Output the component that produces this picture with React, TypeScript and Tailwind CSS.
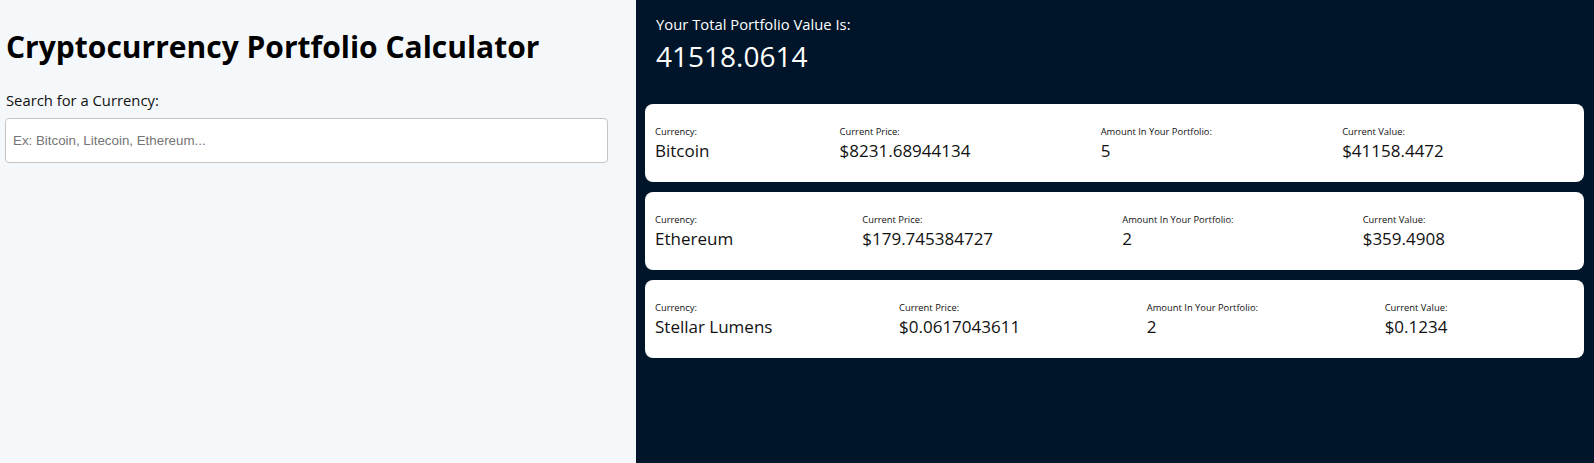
import React from "react";

type Row = { name: string; price: string; amount: string; value: string };

const rows: Row[] = [
  { name: "Bitcoin", price: "$8231.68944134", amount: "5", value: "$41158.4472" },
  { name: "Ethereum", price: "$179.745384727", amount: "2", value: "$359.4908" },
  { name: "Stellar Lumens", price: "$0.0617043611", amount: "2", value: "$0.1234" },
];

function Field({ label, value }: { label: string; value: string }) {
  return (
    <div className="flex-auto">
      <div className="text-[9.4px] leading-[13px] text-[#111]">{label}</div>
      <div className="mt-px text-[17px] leading-[23px] text-[#111]">{value}</div>
    </div>
  );
}

export default function App() {
  return (
    <div
      className="flex h-screen w-full"
      style={{ fontFamily: '"Open Sans", "Noto Sans", sans-serif' }}
    >
      <div className="w-[636px] shrink-0 bg-[#f5f8fb] px-[5px] pt-[27px]">
        <h1 className="pl-px text-[30px] font-bold leading-[40px] text-black">
          Cryptocurrency Portfolio Calculator
        </h1>
        <label className="mt-[23px] block pl-px text-[14.8px] leading-[20px] text-[#111]">
          Search for a Currency:
        </label>
        <input
          type="text"
          placeholder="Ex: Bitcoin, Litecoin, Ethereum..."
          className="mt-[8px] h-[45px] w-[603px] rounded-[4px] border border-[#c4c4c4] bg-white px-[7px] text-[13.33px] outline-none placeholder:text-[#757575]"
          style={{ fontFamily: '"Liberation Sans", Arial, sans-serif' }}
        />
      </div>
      <div className="flex-1 bg-[#001529] pl-[9px] pr-[10px] pt-[14px]">
        <div className="px-[11px] text-white">
          <div className="text-[14.8px] leading-[20px]">Your Total Portfolio Value Is:</div>
          <div className="mt-[3px] text-[28px] leading-[38px]">41518.0614</div>
        </div>
        <div className="mt-[29px] flex flex-col gap-[10px]">
          {rows.map((r) => (
            <div
              key={r.name}
              className="flex h-[78px] items-center rounded-[8px] bg-white px-[10px]"
            >
              <Field label="Currency:" value={r.name} />
              <Field label="Current Price:" value={r.price} />
              <Field label="Amount In Your Portfolio:" value={r.amount} />
              <Field label="Current Value:" value={r.value} />
            </div>
          ))}
        </div>
      </div>
    </div>
  );
}
